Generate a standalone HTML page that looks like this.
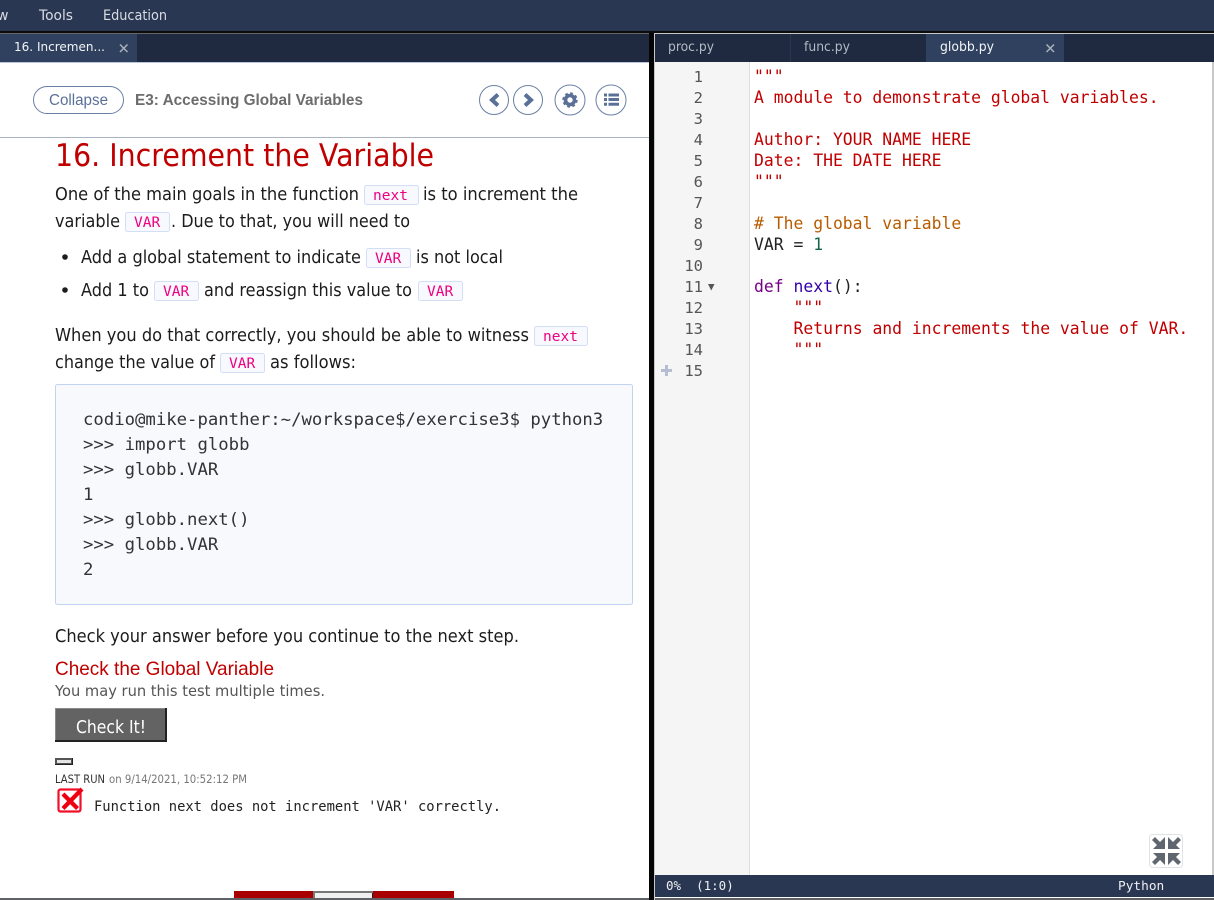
<!DOCTYPE html>
<html lang="en">
<head>
<meta charset="utf-8">
<title>Increment the Variable</title>
<style>
html,body{margin:0;padding:0;background:#fff;width:1214px;height:900px;overflow:hidden}
svg{display:block}
text{white-space:pre}
.s{font-family:"DejaVu Sans",sans-serif;font-size:17.5px;fill:#1c1c1c}
.m{font-family:"DejaVu Sans Mono",monospace}
.c{font-family:"DejaVu Sans Mono",monospace;font-size:14.5px;fill:#ee0080}
.t{font-family:"DejaVu Sans Mono",monospace;font-size:17.3px;fill:#333}
.e{font-family:"DejaVu Sans Mono",monospace;font-size:16.4px;fill:#c00000}
.n{font-family:"DejaVu Sans Mono",monospace;font-size:15.5px;fill:#555}
.chip{fill:#f8f9ff;stroke:#d3def7;stroke-width:1}
</style>
</head>
<body>
<svg width="1214" height="900" viewBox="0 0 1214 900" xmlns="http://www.w3.org/2000/svg">
<rect width="1214" height="900" fill="#fff"/>

<!-- top bar -->
<rect width="1214" height="32" fill="#2a3752"/>
<rect y="31" width="1214" height="2" fill="#0c0c0c"/>
<rect y="33" width="650" height="1" fill="#666"/>
<text x="-3" y="20" font-family="DejaVu Sans" font-size="14" fill="#d8dce3">w</text>
<text x="39" y="20" font-family="DejaVu Sans" font-size="14" fill="#d8dce3" textLength="34" lengthAdjust="spacingAndGlyphs">Tools</text>
<text x="103" y="20" font-family="DejaVu Sans" font-size="14" fill="#d8dce3" textLength="64" lengthAdjust="spacingAndGlyphs">Education</text>

<!-- left tab bar -->
<rect y="34" width="649" height="28" fill="#1f2a40"/>
<rect y="34" width="137" height="28" fill="#30415f"/>
<rect y="62" width="649" height="1" fill="#b9c4e0"/>
<text x="14" y="51" font-family="DejaVu Sans" font-size="12.5" fill="#f2f4f7" textLength="91" lengthAdjust="spacingAndGlyphs">16. Incremen...</text>
<path d="M120 44.500l7.500 7.500m0-7.500l-7.500 7.500" stroke="#aab1bd" stroke-width="1.500" fill="none"/>

<!-- header -->
<rect x="33.500" y="86.500" width="90" height="27" rx="13.500" fill="#fff" stroke="#6a7fa3"/>
<text x="49" y="105" font-family="Liberation Sans" font-size="15.500" fill="#5b7097" textLength="59" lengthAdjust="spacingAndGlyphs">Collapse</text>
<text x="135" y="105" font-family="Liberation Sans" font-size="15.500" font-weight="700" fill="#6c6c6c" textLength="228" lengthAdjust="spacingAndGlyphs">E3: Accessing Global Variables</text>

<circle cx="494" cy="100" r="14.500" fill="#fff" stroke="#6a7fa3"/>
<path d="M498 94.500l-6 5.500 6 5.500" stroke="#5b7097" stroke-width="4" fill="none"/>
<circle cx="528" cy="100" r="14.500" fill="#fff" stroke="#6a7fa3"/>
<path d="M525 94.500l6 5.500-6 5.500" stroke="#5b7097" stroke-width="4" fill="none"/>
<circle cx="570" cy="100" r="15" fill="#fff" stroke="#6a7fa3"/>
<circle cx="570" cy="100" r="4.500" fill="none" stroke="#5b7097" stroke-width="3.600"/>
<circle cx="570" cy="100" r="6.800" fill="none" stroke="#5b7097" stroke-width="1.800" stroke-dasharray="2.800 2.540"/>
<circle cx="611" cy="100" r="15" fill="#fff" stroke="#6a7fa3"/>
<path d="M604 93.500h3v3h-3zM604 98h3v3h-3zM604 102.700h3v3h-3zM608.500 93.500h10.500v3h-10.500zM608.500 98h10.500v3h-10.500zM608.500 102.700h10.500v3h-10.500z" fill="#5b7097"/>
<rect y="137" width="649" height="1" fill="#aab3c2"/>

<!-- content -->
<text x="55" y="166" font-family="DejaVu Sans" font-size="31" fill="#c00000" textLength="379" lengthAdjust="spacingAndGlyphs">16. Increment the Variable</text>

<text class="s" x="55" y="200" textLength="304" lengthAdjust="spacingAndGlyphs">One of the main goals in the function</text>
<rect class="chip" x="364.500" y="185.500" width="54" height="19" rx="2"/>
<text class="c" x="373" y="200">next</text>
<text class="s" x="423" y="200" textLength="155" lengthAdjust="spacingAndGlyphs">is to increment the</text>

<text class="s" x="55" y="227" textLength="65" lengthAdjust="spacingAndGlyphs">variable</text>
<rect class="chip" x="125.500" y="212.500" width="44" height="19" rx="2"/>
<text class="c" x="134" y="227">VAR</text>
<text class="s" x="171" y="227" textLength="239" lengthAdjust="spacingAndGlyphs">. Due to that, you will need to</text>

<circle cx="65" cy="257" r="2.800" fill="#1c1c1c"/>
<text class="s" x="81" y="263" textLength="280" lengthAdjust="spacingAndGlyphs">Add a global statement to indicate</text>
<rect class="chip" x="366.500" y="248.500" width="44" height="19" rx="2"/>
<text class="c" x="375" y="263">VAR</text>
<text class="s" x="416" y="263" textLength="87" lengthAdjust="spacingAndGlyphs">is not local</text>

<circle cx="65" cy="290" r="2.800" fill="#1c1c1c"/>
<text class="s" x="81" y="296" textLength="68" lengthAdjust="spacingAndGlyphs">Add 1 to</text>
<rect class="chip" x="154.500" y="281.500" width="44" height="19" rx="2"/>
<text class="c" x="163" y="296">VAR</text>
<text class="s" x="204" y="296" textLength="208" lengthAdjust="spacingAndGlyphs">and reassign this value to</text>
<rect class="chip" x="418.500" y="281.500" width="44" height="19" rx="2"/>
<text class="c" x="427" y="296">VAR</text>

<text class="s" x="55" y="341" textLength="474" lengthAdjust="spacingAndGlyphs">When you do that correctly, you should be able to witness</text>
<rect class="chip" x="534.500" y="326.500" width="53" height="19" rx="2"/>
<text class="c" x="543" y="341">next</text>
<text class="s" x="55" y="368" textLength="160" lengthAdjust="spacingAndGlyphs">change the value of</text>
<rect class="chip" x="220.500" y="353.500" width="44" height="19" rx="2"/>
<text class="c" x="229" y="368">VAR</text>
<text class="s" x="270" y="368" textLength="86" lengthAdjust="spacingAndGlyphs">as follows:</text>

<rect x="55.500" y="384.500" width="577" height="220" rx="2" fill="#f7f9fd" stroke="#c3d3f2"/>
<text class="t" x="83" y="425">codio@mike-panther:~/workspace$/exercise3$ python3</text>
<text class="t" x="83" y="450">&gt;&gt;&gt; import globb</text>
<text class="t" x="83" y="475">&gt;&gt;&gt; globb.VAR</text>
<text class="t" x="83" y="500">1</text>
<text class="t" x="83" y="525">&gt;&gt;&gt; globb.next()</text>
<text class="t" x="83" y="550">&gt;&gt;&gt; globb.VAR</text>
<text class="t" x="83" y="575">2</text>

<text class="s" x="55" y="642" textLength="464" lengthAdjust="spacingAndGlyphs">Check your answer before you continue to the next step.</text>
<text x="55" y="675" font-family="Liberation Sans" font-size="19.500" fill="#c00000" textLength="219" lengthAdjust="spacingAndGlyphs">Check the Global Variable</text>
<text x="55" y="696" font-family="DejaVu Sans" font-size="15.500" fill="#555" textLength="270" lengthAdjust="spacingAndGlyphs">You may run this test multiple times.</text>

<!-- button -->
<rect x="55" y="708" width="112" height="34" fill="#222"/>
<rect x="55" y="708" width="110" height="32" fill="#8a8a8a"/>
<rect x="56" y="709" width="109" height="31" fill="#636363"/>
<text x="76" y="733" font-family="DejaVu Sans" font-size="17.500" fill="#fff" textLength="70" lengthAdjust="spacingAndGlyphs">Check It!</text>

<rect x="55" y="758" width="18" height="7" fill="#222"/>
<rect x="55" y="758" width="17" height="6" fill="#555"/>
<rect x="57" y="760" width="14" height="3" fill="#e4e4e4"/>

<text x="55" y="783" font-family="DejaVu Sans" font-size="11.500" fill="#333" textLength="50" lengthAdjust="spacingAndGlyphs">LAST RUN</text>
<text x="109" y="783" font-family="DejaVu Sans" font-size="11.500" fill="#777" textLength="138" lengthAdjust="spacingAndGlyphs">on 9/14/2021, 10:52:12 PM</text>

<!-- fail icon -->
<rect x="58.500" y="789.500" width="22" height="22" rx="2" fill="#fff" stroke="#f0102a" stroke-width="2.200"/>
<path d="M63 794l14.500 14.500" stroke="#ee0011" stroke-width="4.200" fill="none"/>
<path d="M63 808.500L82 789" stroke="#ee0011" stroke-width="4.200" fill="none"/>
<text class="m" x="94" y="811" font-size="13.800" fill="#222">Function next does not increment 'VAR' correctly.</text>

<!-- bottom slider -->
<rect x="234" y="891" width="220" height="7" fill="#a80000"/>
<rect x="313" y="891" width="60" height="7" fill="#777"/>
<rect x="315" y="893" width="57" height="5" fill="#f0f0f0"/>
<rect x="372" y="893" width="1" height="5" fill="#222"/>
<rect y="898" width="1214" height="2" fill="#5e6266"/>

<!-- divider -->
<rect x="649" y="33" width="5" height="867" fill="#050505"/>
<rect x="654" y="33" width="1" height="867" fill="#c8c8c8"/>
<rect x="654" y="33" width="560" height="1" fill="#c8c8c8"/>
<rect x="1212" y="33" width="2" height="843" fill="#c8c8c8"/>

<!-- right tabs -->
<rect x="655" y="34" width="559" height="28" fill="#1f2a40"/>
<rect x="790" y="34" width="1" height="28" fill="#2a3752"/>
<rect x="926" y="34" width="138" height="28" fill="#30415f"/>
<text x="668" y="51" font-family="DejaVu Sans" font-size="13.500" fill="#b4bac6" textLength="46" lengthAdjust="spacingAndGlyphs">proc.py</text>
<text x="804" y="51" font-family="DejaVu Sans" font-size="13.500" fill="#b4bac6" textLength="46" lengthAdjust="spacingAndGlyphs">func.py</text>
<text x="940" y="51" font-family="DejaVu Sans" font-size="13.500" fill="#f2f4f7" textLength="54" lengthAdjust="spacingAndGlyphs">globb.py</text>
<path d="M1046.500 44.500l7.500 7.500m0-7.500l-7.500 7.500" stroke="#aab1bd" stroke-width="1.500" fill="none"/>

<!-- gutter -->
<rect x="655" y="62" width="94" height="814" fill="#f5f5f5"/>
<rect x="749" y="62" width="1" height="814" fill="#dddddd"/>
<text class="n" x="703" y="82" text-anchor="end">1</text>
<text class="n" x="703" y="103" text-anchor="end">2</text>
<text class="n" x="703" y="124" text-anchor="end">3</text>
<text class="n" x="703" y="145" text-anchor="end">4</text>
<text class="n" x="703" y="166" text-anchor="end">5</text>
<text class="n" x="703" y="187" text-anchor="end">6</text>
<text class="n" x="703" y="208" text-anchor="end">7</text>
<text class="n" x="703" y="229" text-anchor="end">8</text>
<text class="n" x="703" y="250" text-anchor="end">9</text>
<text class="n" x="703" y="271" text-anchor="end">10</text>
<text class="n" x="703" y="292" text-anchor="end">11</text>
<text class="n" x="703" y="313" text-anchor="end">12</text>
<text class="n" x="703" y="334" text-anchor="end">13</text>
<text class="n" x="703" y="355" text-anchor="end">14</text>
<text class="n" x="703" y="376" text-anchor="end">15</text>
<path d="M708 284h6.500l-3.250 6.500z" fill="#555"/>
<path d="M661 370.500h11M666.500 365v11" stroke="#b4bdd2" stroke-width="3" fill="none"/>

<!-- editor -->
<text class="e" x="754" y="82">"""</text>
<text class="e" x="754" y="103">A module to demonstrate global variables.</text>
<text class="e" x="754" y="145">Author: YOUR NAME HERE</text>
<text class="e" x="754" y="166">Date: THE DATE HERE</text>
<text class="e" x="754" y="187">"""</text>
<text class="e" x="754" y="229" style="fill:#b85c00"># The global variable</text>
<text class="e" x="754" y="250" style="fill:#222">VAR = <tspan fill="#116644">1</tspan></text>
<text class="e" x="754" y="292"><tspan fill="#770088">def</tspan> <tspan fill="#3300aa">next</tspan><tspan fill="#222">():</tspan></text>
<text class="e" x="793.500" y="313">"""</text>
<text class="e" x="793.500" y="334">Returns and increments the value of VAR.</text>
<text class="e" x="793.500" y="355">"""</text>

<!-- collapse icon -->
<rect x="1149.500" y="834.500" width="33" height="33" rx="3" fill="#fff" stroke="#dfe3e8"/>
<path d="M1165 849L1153 849L1157 845L1152 840L1155 837L1160 842L1165 837z" fill="#5f6670"/>
<path d="M1168 849L1180 849L1176 845L1181 840L1178 837L1173 842L1168 837z" fill="#5f6670"/>
<path d="M1165 853L1153 853L1157 857L1152 862L1155 865L1160 860L1165 865z" fill="#5f6670"/>
<path d="M1168 853L1180 853L1176 857L1181 862L1178 865L1173 860L1168 865z" fill="#5f6670"/>

<!-- status bar -->
<rect x="655" y="875" width="559" height="22" fill="#2a3752"/>
<text class="m" x="666" y="890" font-size="12.500" fill="#eef0f4">0%  (1:0)</text>
<text class="m" x="1118" y="890" font-size="12.800" fill="#eef0f4">Python</text>
</svg>
</body>
</html>
